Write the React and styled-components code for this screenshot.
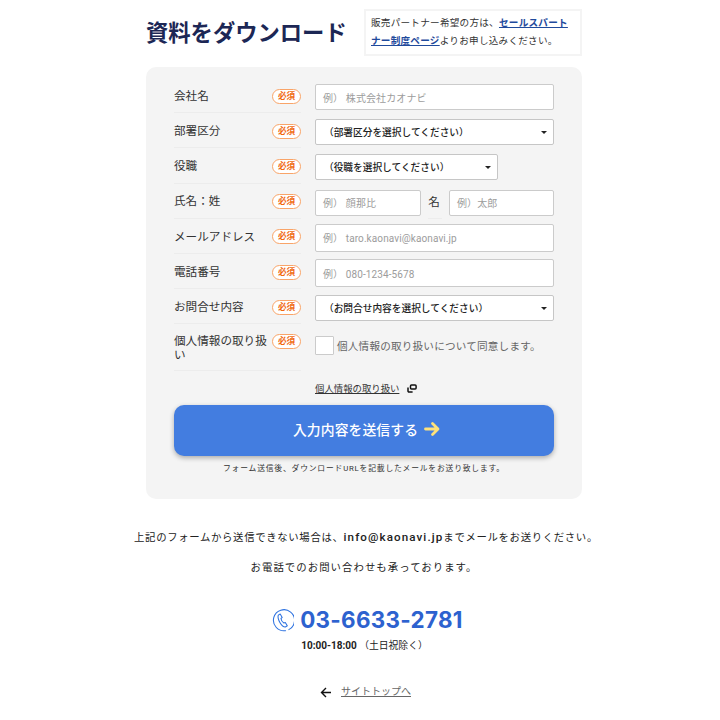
import React from 'react';
import styled, { createGlobalStyle } from 'styled-components';

const Global = createGlobalStyle`
  html, body { margin: 0; padding: 0; background: #fff; }
  body { font-family: Roboto, "Noto Sans CJK JP", "Noto Sans", sans-serif; color: #222; }
  * { box-sizing: border-box; }
`;

const Page = styled.div`
  width: 720px;
  height: 720px;
  overflow: hidden;
  display: flex;
  flex-direction: column;
  align-items: center;
  padding: 9px 0 0 8px;
`;
const Header = styled.div`
  width: 436px;
  height: 47px;
  display: flex;
  align-items: center;
  justify-content: space-between;
`;
const Title = styled.h1`
  margin: 0;
  padding-top: 2px;
  font-size: 22.3px;
  font-weight: 700;
  color: #1c2755;
  line-height: 45px;
  white-space: nowrap;
`;
const Note = styled.p`
  margin: 0;
  width: 218px;
  height: 47px;
  border: 2px solid #f4f4f4;
  padding: 3px 5px;
  font-size: 9.6px;
  letter-spacing: 0.25px;
  line-height: 18px;
  color: #333;
  a { color: #1f4a9c; font-weight: 700; text-decoration: underline; }
`;
const Panel = styled.div`
  width: 436px;
  height: 432px;
  margin-top: 11px;
  padding: 11px 28px 0;
  background: #f4f4f4;
  border-radius: 10px;
`;
const Row = styled.div`
  display: grid;
  grid-template-columns: 127px 239px;
  column-gap: 14px;
  height: ${p => p.$h || 35.2}px;
`;
const LabelCell = styled.div`
  display: flex;
  justify-content: space-between;
  align-items: ${p => (p.$top ? 'flex-start' : 'center')};
  padding-top: ${p => (p.$top ? '10px' : '2px')};
  border-bottom: 1px solid #ececec;
`;
const Label = styled.span`
  width: 96px;
  padding-top: 1px;
  font-size: 11.6px;
  line-height: 13.5px;
  color: #333;
`;
const Required = styled.span`
  flex: none;
  width: 29px;
  height: 15px;
  border: 1px solid #f9a468;
  border-radius: 8px;
  background: #fff;
  color: #f0680f;
  font-size: 8.6px;
  font-weight: 700;
  line-height: 13px;
  text-align: center;
`;
const Control = styled.div`
  display: flex;
  align-items: center;
  padding-top: 3px;
`;
const Input = styled.div`
  flex: ${p => (p.$w ? 'none' : 1)};
  width: ${p => (p.$w ? `${p.$w}px` : 'auto')};
  height: ${p => p.$h || 26}px;
  display: flex;
  align-items: center;
  padding-left: 7px;
  background: #fff;
  border: 1px solid #cbcbcb;
  border-radius: 2px;
  font-size: 10px;
  letter-spacing: 0.1px;
  color: #9c9c9c;
  white-space: pre;
`;
const Select = styled.div`
  flex: ${p => (p.$w ? 'none' : 1)};
  width: ${p => (p.$w ? `${p.$w}px` : 'auto')};
  height: 26px;
  display: flex;
  align-items: center;
  justify-content: space-between;
  padding: 0 6px 0 8px;
  background: #fff;
  border: 1px solid #c6c6c6;
  border-radius: 2px;
  font-size: 9.7px;
  font-weight: 500;
  color: #222;
  &::after {
    content: '';
    border-left: 3px solid transparent;
    border-right: 3px solid transparent;
    border-top: 3px solid #222;
  }
`;
const NameSep = styled.span`
  width: 28px;
  height: 35.2px;
  margin-top: -3px;
  padding-right: 2px;
  flex: none;
  display: flex;
  align-items: center;
  justify-content: center;
  font-size: 11.6px;
  color: #333;
  position: relative;
  &::after {
    content: '';
    position: absolute;
    left: 7px;
    right: 7px;
    bottom: 0;
    border-bottom: 1px solid #ececec;
  }
`;
const Agree = styled.label`
  display: flex;
  align-items: center;
  gap: 3px;
  font-size: 10.6px;
  letter-spacing: 0.2px;
  color: #666;
  padding-bottom: 8px;
  white-space: nowrap;
`;
const CheckBox = styled.span`
  width: 19px;
  height: 19px;
  flex: none;
  background: #fff;
  border: 1px solid #cbcbcb;
  border-radius: 1px;
`;
const PolicyRow = styled.div`
  height: 34px;
  padding-left: 141px;
  display: flex;
  align-items: center;
  gap: 8px;
  font-size: 9.4px;
  color: #333;
  a { color: #333; text-decoration: underline; }
`;
const SendButton = styled.button`
  width: 380px;
  height: 51px;
  display: flex;
  align-items: center;
  justify-content: center;
  gap: 6px;
  padding: 0 0 3px 5px;
  border: 0;
  border-radius: 10px;
  background: #437de0;
  box-shadow: 0 2px 5px rgba(0, 0, 0, 0.3);
  color: #fff;
  font-family: inherit;
  font-size: 13.8px;
  font-weight: 500;
  letter-spacing: 0.1px;
`;
const SendNote = styled.p`
  margin: 7px 0 0;
  text-align: center;
  font-size: 7.8px;
  letter-spacing: 0.8px;
  line-height: 12px;
  color: #333;
`;
const Notice = styled.p`
  margin: ${p => p.$mt}px 0 0;
  padding-left: ${p => p.$pl || 0}px;
  font-size: 10.4px;
  letter-spacing: ${p => p.$ls}px;
  line-height: 16px;
  color: #222;
  white-space: nowrap;
  b { font-weight: 500; font-size: 11.6px; letter-spacing: 1.1px; }
`;
const Phone = styled.div`
  margin-top: 27px;
  padding-left: 6px;
  display: flex;
  align-items: center;
  gap: 6px;
  color: #2d62cf;
  font-family: Inter, Roboto, sans-serif;
  font-size: 22.4px;
  font-weight: 700;
  letter-spacing: 0.3px;
  line-height: 34px;
`;
const Hours = styled.div`
  margin-top: 1px;
  padding-left: 1px;
  font-size: 9.8px;
  line-height: 16px;
  color: #222;
  b { font-weight: 700; font-size: 10px; }
`;
const TopLink = styled.div`
  margin-top: 30px;
  padding-left: 3px;
  display: flex;
  align-items: center;
  gap: 9px;
  font-size: 10px;
  line-height: 16px;
  a { color: #666; text-decoration: underline; }
`;

function ArrowRight() {
  return (
    <svg width="16" height="16" viewBox="0 0 16 16" fill="none" stroke="#ffe27a" strokeWidth="2.8" strokeLinecap="round" strokeLinejoin="round">
      <path d="M1.5 8h12M8.5 2.5L14 8l-5.500 5.500" />
    </svg>
  );
}
function ExternalIcon() {
  return (
    <svg width="10" height="9" viewBox="0 0 10 9" fill="none" stroke="#111" strokeWidth="1.5">
      <rect x="3.500" y="1" width="5.600" height="4" rx="1" />
      <path d="M1 3.500v3.600a1 1 0 0 0 1 1h3.600" />
    </svg>
  );
}
function PhoneIcon() {
  return (
    <svg width="23" height="23" viewBox="0 0 24 24" fill="none" stroke="#2d72e0" strokeWidth="1.1" strokeLinecap="round" strokeLinejoin="round">
      <path d="M18.600 21.500A11 11 0 1 0 15.200 22.600" />
      <path d="M7.600 6.400l2-1.200 2.100 3.600-1.300 1.100c.2 1.600 1.600 3.900 3 4.700l1.500-.6 2.100 3.500-2 1.300c-3.600.3-8.800-8.300-7.400-12.400z" />
    </svg>
  );
}
function ArrowLeft() {
  return (
    <svg width="12" height="11" viewBox="0 0 12 11" fill="none" stroke="#111" strokeWidth="1.4">
      <path d="M11 5.500H1.500M6 1L1.500 5.500 6 10" />
    </svg>
  );
}

function Field({ label, children, h, top }) {
  return (
    <Row $h={h}>
      <LabelCell $top={top}>
        <Label>{label}</Label>
        <Required>必須</Required>
      </LabelCell>
      <Control>{children}</Control>
    </Row>
  );
}

export default function App() {
  return (
    <Page>
      <Global />
      <Header>
        <Title>資料をダウンロード</Title>
        <Note>
          販売パートナー希望の方は、<a href="#p">セールスパート</a><br />
          <a href="#p">ナー制度ページ</a>よりお申し込みください。
        </Note>
      </Header>
      <Panel>
        <Field label="会社名"><Input>例） 株式会社カオナビ</Input></Field>
        <Field label="部署区分"><Select>（部署区分を選択してください）</Select></Field>
        <Field label="役職"><Select $w={183}>（役職を選択してください）</Select></Field>
        <Field label="氏名：姓">
          <Input $w={106}>例） 顔那比</Input>
          <NameSep>名</NameSep>
          <Input $w={105}>例）太郎</Input>
        </Field>
        <Field label="メールアドレス"><Input $h={28}>例） taro.kaonavi@kaonavi.jp</Input></Field>
        <Field label="電話番号"><Input $h={28}>例） 080-1234-5678</Input></Field>
        <Field label="お問合せ内容"><Select>（お問合せ内容を選択してください）</Select></Field>
        <Field label="個人情報の取り扱い" h={47} top>
          <Agree><CheckBox />個人情報の取り扱いについて同意します。</Agree>
        </Field>
        <PolicyRow><a href="#p">個人情報の取り扱い</a><ExternalIcon /></PolicyRow>
        <SendButton>入力内容を送信する <ArrowRight /></SendButton>
        <SendNote>フォーム送信後、ダウンロードURLを記載したメールをお送り致します。</SendNote>
      </Panel>
      <Notice $mt={30} $ls={0.65} $pl={4}>上記のフォームから送信できない場合は、<b>info@kaonavi.jp</b>までメールをお送りください。</Notice>
      <Notice $mt={14} $ls={1.05}>お電話でのお問い合わせも承っております。</Notice>
      <Phone><PhoneIcon />03-6633-2781</Phone>
      <Hours><b>10:00-18:00</b> （土日祝除く）</Hours>
      <TopLink><ArrowLeft /><a href="#t">サイトトップへ</a></TopLink>
    </Page>
  );
}
